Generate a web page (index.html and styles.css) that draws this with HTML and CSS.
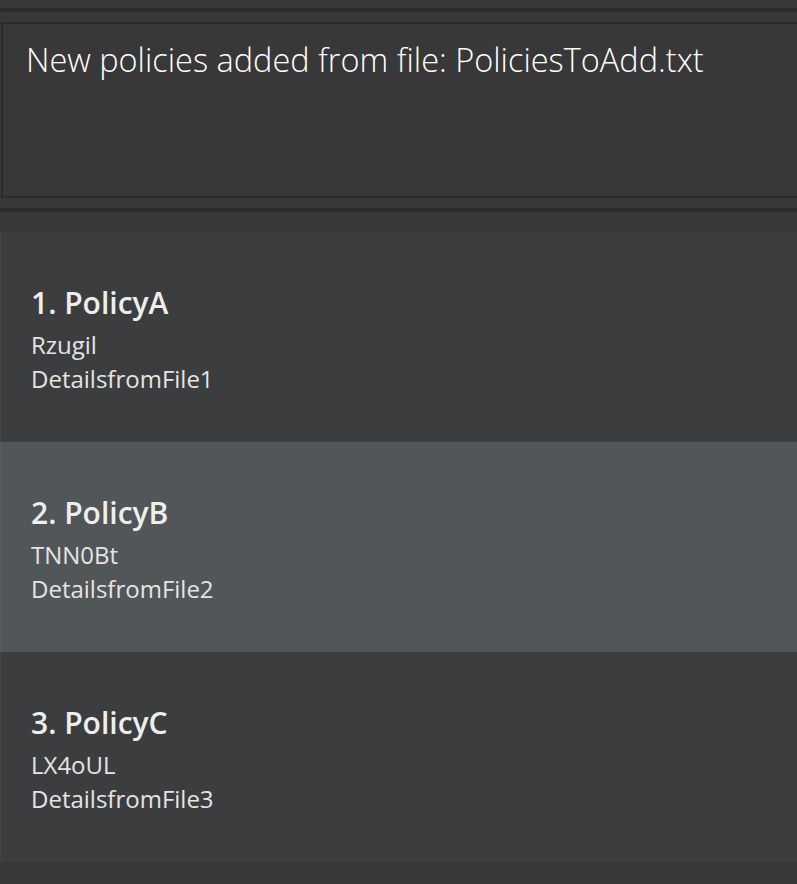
FILE: index.html
```html
<!DOCTYPE html>
<html>
<head>
<meta charset="utf-8">
<link rel="stylesheet" href="styles.css">
</head>
<body>
<div class="app">
  <div class="divider top"></div>
  <div class="result-wrap">
    <div class="result-box">
      <p class="result-text">New policies added from file: PoliciesToAdd.txt</p>
    </div>
  </div>
  <div class="divider mid"></div>
  <ul class="policy-list">
    <li class="cell">
      <div class="title">1. PolicyA</div>
      <div class="details">
        <div class="detail">Rzugil</div>
        <div class="detail">DetailsfromFile1</div>
      </div>
    </li>
    <li class="cell selected">
      <div class="title">2. PolicyB</div>
      <div class="details">
        <div class="detail">TNN0Bt</div>
        <div class="detail">DetailsfromFile2</div>
      </div>
    </li>
    <li class="cell">
      <div class="title">3. PolicyC</div>
      <div class="details">
        <div class="detail">LX4oUL</div>
        <div class="detail">DetailsfromFile3</div>
      </div>
    </li>
  </ul>
</div>
</body>
</html>
```
FILE: styles.css
```css
html, body {
  margin: 0;
  padding: 0;
  background: #383838;
  height: 100%;
  overflow: hidden;
}
.app {
  width: 797px;
  padding-top: 8px;
  font-family: "Open Sans", "Noto Sans", sans-serif;
}
.divider {
  height: 4px;
  background: #2b2b2b;
}
.result-wrap {
  padding: 10px 0 10px 1px;
}
.result-box {
  height: 172px;
  border: 2px solid #2b2b2b;
  border-right: none;
  margin-right: -10px;
  background: #383838;
  box-sizing: content-box;
}
.result-text {
  margin: 0;
  padding: 14px 0 0 23px;
  color: #ffffff;
  font-weight: 300;
  font-size: 32.5px;
  line-height: 44px;
  white-space: nowrap;
}
.policy-list {
  list-style: none;
  margin: 20px 0 0 0;
  padding: 0;
}
.cell {
  height: 210px;
  box-sizing: border-box;
  background: #3c3d3f;
  border-left: 1px solid #424345;
  padding: 49px 0 0 30px;
  color: #e6e6e6;
}
.cell.selected {
  background: #515658;
  border-left-color: #585d5f;
}
.title {
  font-weight: 600;
  font-size: 30px;
  line-height: 44px;
  color: #eeeeee;
}
.details {
  margin-top: 3px;
}
.detail {
  font-size: 24px;
  line-height: 34px;
  color: #e4e4e4;
}
```
